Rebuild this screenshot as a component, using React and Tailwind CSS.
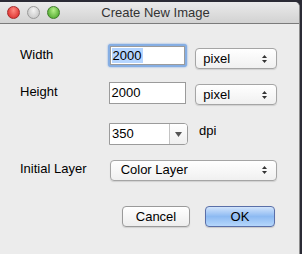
import React from 'react'

const Light = ({ from, to, border }) => (
  <div
    className={`w-[13px] h-[13px] rounded-full border ${border} bg-radial-[at_50%_30%] ${from} ${to}`}
  />
)

const Arrows = () => (
  <svg width="7" height="10" viewBox="0 0 7 10" className="shrink-0">
    <path d="M3.5 1 L6 4 L1 4 Z" fill="#333" />
    <path d="M3.5 9 L6 6 L1 6 Z" fill="#333" />
  </svg>
)

const Select = ({ label, className }) => (
  <div
    className={`h-[21px] flex items-center justify-between pl-[7px] pr-[8px] rounded-[4px] border border-[#a5a5a5] bg-linear-to-b from-white to-[#f0f0f0] shadow-[0_1px_1px_rgba(0,0,0,0.12)] ${className}`}
  >
    <span>{label}</span>
    <Arrows />
  </div>
)

export default function App() {
  return (
    <div className="w-[302px] h-[254px] bg-[#2b2b35] overflow-hidden font-['Liberation_Sans',Arial,sans-serif] text-[13px] text-black">
      <div className="mt-[2px] w-[300px] h-[252px] bg-[#ececec] border-r border-[#8e8e8e] rounded-tr-[5px] flex flex-col">
        {/* title bar */}
        <div className="h-[22px] rounded-tr-[5px] bg-linear-to-b from-[#ebebeb] to-[#d2d2d2] border-b border-[#7b7b7b] flex items-center relative">
          <div className="flex items-center gap-[7px] pl-[7px]">
            <Light from="from-[#ff8a80]" to="to-[#d61e1e]" border="border-[#a52a2a]" />
            <Light from="from-[#f4f4f4]" to="to-[#bdbdbd]" border="border-[#9a9a9a]" />
            <Light from="from-[#b6ef8a]" to="to-[#3c9c1c]" border="border-[#3f7d2a]" />
          </div>
          <div className="absolute inset-0 flex items-center justify-center pl-[12px] text-[#333] text-[13px]">
            Create New Image
          </div>
        </div>

        {/* body */}
        <div className="pl-[20px] pr-[22px] pt-[20px]">
          <div className="flex items-center h-[23px]">
            <span className="w-[88px] -mt-[2px]">Width</span>
            <div className="w-[80px] h-[23px] rounded-[3px] border-[2px] border-[#86aee3] shadow-[0_0_2px_#6b9ee0] flex items-center bg-white">
              <div className="w-full h-[19px] border border-[#9b9b9b] bg-white flex items-center pl-[1px]">
                <span className="bg-[#b5d5ff] px-[1px] leading-[15px]">2000</span>
              </div>
            </div>
            <Select label="pixel" className="ml-[8px] w-[82px] mt-[6px]" />
          </div>

          <div className="flex items-center h-[22px] mt-[15px]">
            <span className="w-[89px] -mt-[3px]">Height</span>
            <div className="w-[78px] h-[22px] border border-[#9b9b9b] bg-white flex items-center pl-[2px]">
              2000
            </div>
            <Select label="pixel" className="ml-[9px] w-[82px] mt-[3px]" />
          </div>

          <div className="flex items-center h-[22px] mt-[19px]">
            <div className="ml-[89px] w-[79px] h-[22px] flex rounded-r-[4px] border border-[#9b9b9b] bg-white overflow-hidden">
              <div className="flex-1 flex items-center pl-[2px]">350</div>
              <div className="w-[18px] border-l border-[#c4c4c4] bg-linear-to-b from-white to-[#efefef] flex items-center justify-center">
                <svg width="7" height="5" viewBox="0 0 7 5">
                  <path d="M0 0 L7 0 L3.5 5 Z" fill="#555" />
                </svg>
              </div>
            </div>
            <span className="ml-[11px] -mt-[6px]">dpi</span>
          </div>

          <div className="flex items-center h-[22px] mt-[14px]">
            <span className="w-[90px] -mt-[2px]">Initial Layer</span>
            <Select label="Color Layer" className="w-[168px] pl-[10px]" />
          </div>

          <div className="flex justify-end gap-[15px] mt-[25px] pr-[2px]">
            <div className="w-[68px] h-[21px] rounded-[4px] border border-[#9a9a9a] bg-linear-to-b from-white to-[#ededed] shadow-[0_1px_1px_rgba(0,0,0,0.12)] flex items-center justify-center">
              Cancel
            </div>
            <div className="w-[70px] h-[21px] rounded-[4px] border border-[#5a6fa8] bg-linear-to-b from-[#d2e4fb] via-[#8dbaf2] to-[#b6d7fb] shadow-[0_1px_1px_rgba(0,0,0,0.15)] flex items-center justify-center">
              OK
            </div>
          </div>
        </div>
      </div>
    </div>
  )
}
